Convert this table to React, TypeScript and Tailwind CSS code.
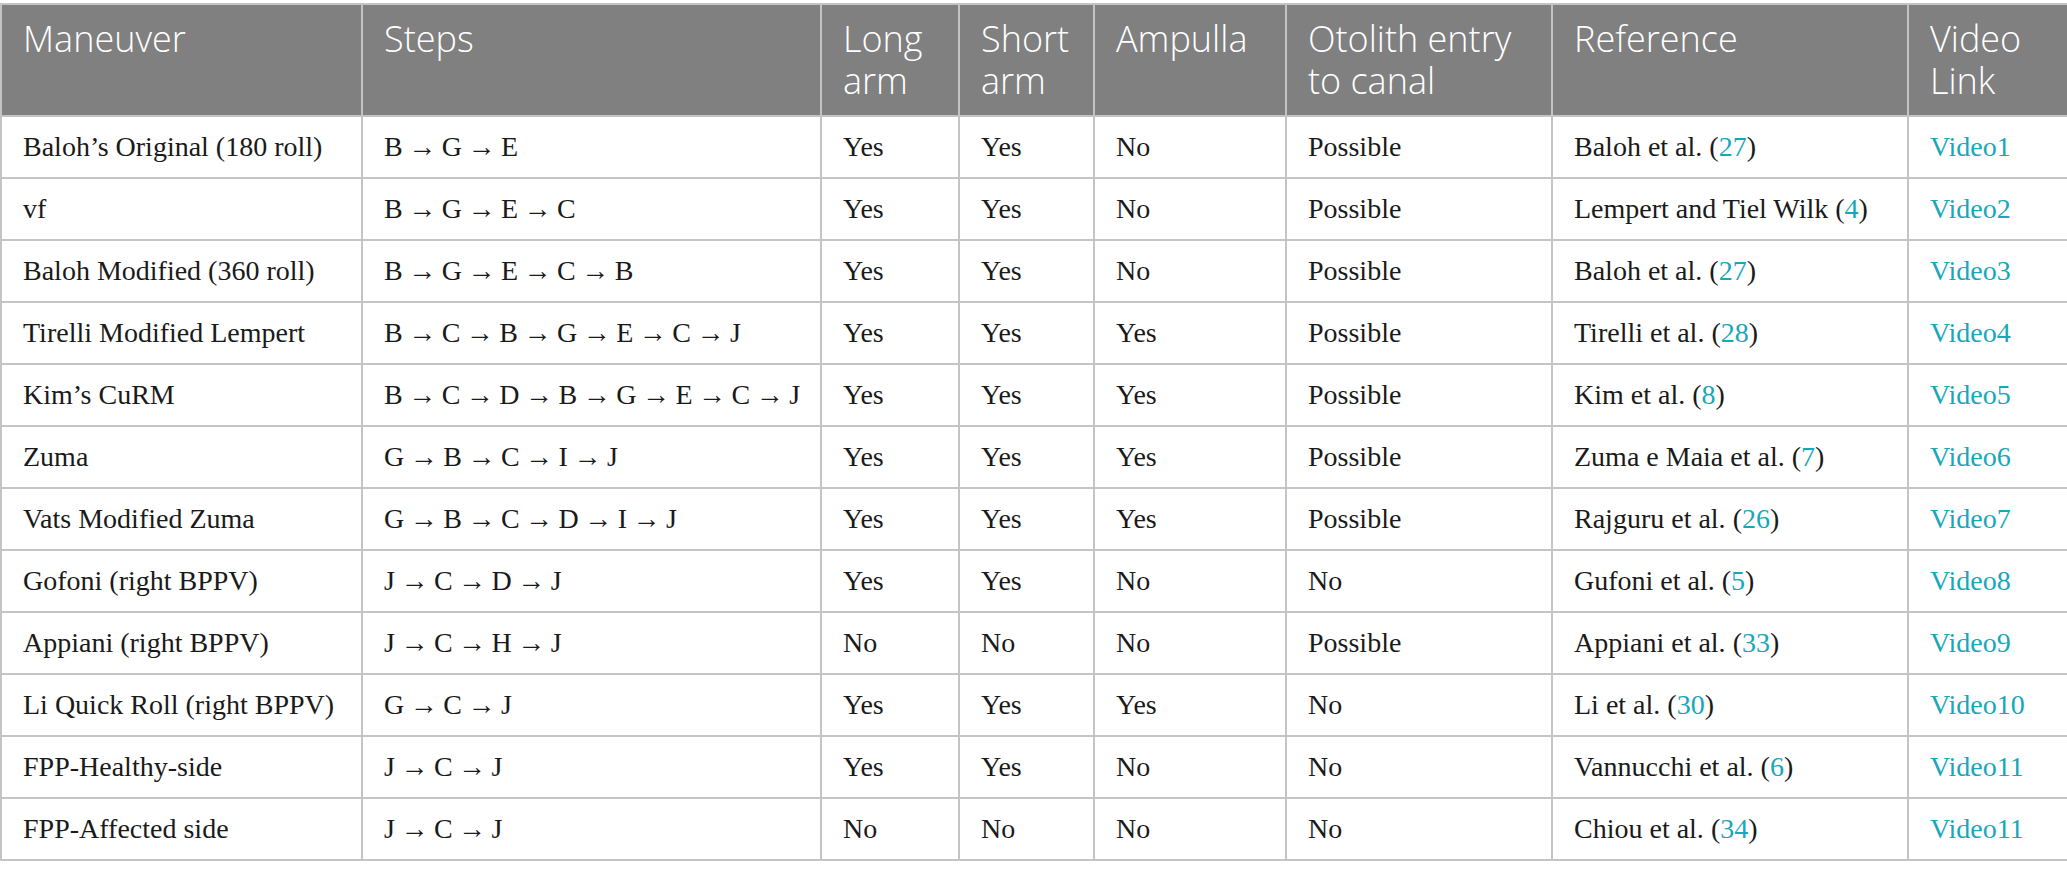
import React from 'react';

type Row = {
  name: string;
  steps: string;
  long: string;
  short: string;
  ampulla: string;
  entry: string;
  ref: string;
  cite: string;
  video: string;
};

const rows: Row[] = [
  { name: 'Baloh’s Original (180 roll)', steps: 'B → G → E', long: 'Yes', short: 'Yes', ampulla: 'No', entry: 'Possible', ref: 'Baloh et al.', cite: '27', video: 'Video1' },
  { name: 'vf', steps: 'B → G → E → C', long: 'Yes', short: 'Yes', ampulla: 'No', entry: 'Possible', ref: 'Lempert and Tiel Wilk', cite: '4', video: 'Video2' },
  { name: 'Baloh Modified (360 roll)', steps: 'B → G → E → C → B', long: 'Yes', short: 'Yes', ampulla: 'No', entry: 'Possible', ref: 'Baloh et al.', cite: '27', video: 'Video3' },
  { name: 'Tirelli Modified Lempert', steps: 'B → C → B → G → E → C → J', long: 'Yes', short: 'Yes', ampulla: 'Yes', entry: 'Possible', ref: 'Tirelli et al.', cite: '28', video: 'Video4' },
  { name: 'Kim’s CuRM', steps: 'B → C → D → B → G → E → C → J', long: 'Yes', short: 'Yes', ampulla: 'Yes', entry: 'Possible', ref: 'Kim et al.', cite: '8', video: 'Video5' },
  { name: 'Zuma', steps: 'G → B → C → I → J', long: 'Yes', short: 'Yes', ampulla: 'Yes', entry: 'Possible', ref: 'Zuma e Maia et al.', cite: '7', video: 'Video6' },
  { name: 'Vats Modified Zuma', steps: 'G → B → C → D → I → J', long: 'Yes', short: 'Yes', ampulla: 'Yes', entry: 'Possible', ref: 'Rajguru et al.', cite: '26', video: 'Video7' },
  { name: 'Gofoni (right BPPV)', steps: 'J → C → D → J', long: 'Yes', short: 'Yes', ampulla: 'No', entry: 'No', ref: 'Gufoni et al.', cite: '5', video: 'Video8' },
  { name: 'Appiani (right BPPV)', steps: 'J → C → H → J', long: 'No', short: 'No', ampulla: 'No', entry: 'Possible', ref: 'Appiani et al.', cite: '33', video: 'Video9' },
  { name: 'Li Quick Roll (right BPPV)', steps: 'G → C → J', long: 'Yes', short: 'Yes', ampulla: 'Yes', entry: 'No', ref: 'Li et al.', cite: '30', video: 'Video10' },
  { name: 'FPP-Healthy-side', steps: 'J → C → J', long: 'Yes', short: 'Yes', ampulla: 'No', entry: 'No', ref: 'Vannucchi et al.', cite: '6', video: 'Video11' },
  { name: 'FPP-Affected side', steps: 'J → C → J', long: 'No', short: 'No', ampulla: 'No', entry: 'No', ref: 'Chiou et al.', cite: '34', video: 'Video11' },
];

// header labels, each inner array is one line
const headers: string[][] = [
  ['Maneuver'],
  ['Steps'],
  ['Long', 'arm'],
  ['Short', 'arm'],
  ['Ampulla'],
  ['Otolith entry', 'to canal'],
  ['Reference'],
  ['Video', 'Link'],
];
const widths = [361, 459, 138, 135, 192, 266, 356, 160];

const th = 'border-2 border-[#c4c4c4] px-[21px] pt-[13px] align-top text-left font-light text-[36px] leading-[42px] text-white whitespace-nowrap';
const td = 'border-2 border-[#c4c4c4] px-[21px] align-middle text-[28px] text-[#1a1a1a] whitespace-nowrap';

export default function App() {
  return (
    <div className="bg-white w-[2067px] h-[877px] pt-[3px]">
      <table className="table-fixed border-collapse w-[2067px]">
        <colgroup>
          {widths.map((w, i) => (
            <col key={i} style={{ width: w }} />
          ))}
        </colgroup>
        <thead>
          <tr className="h-[112px] bg-[#808080] font-['Open_Sans',sans-serif]">
            {headers.map((lines, i) => (
              <th key={i} className={th}>
                {lines.map((l) => (
                  <div key={l}>{l}</div>
                ))}
              </th>
            ))}
          </tr>
        </thead>
        <tbody className="font-['Liberation_Serif',serif]">
          {rows.map((r, i) => (
            <tr key={i} className="h-[62px]">
              <td className={td}>{r.name}</td>
              <td className={`${td} [word-spacing:-1.5px]`}>{r.steps}</td>
              <td className={td}>{r.long}</td>
              <td className={td}>{r.short}</td>
              <td className={td}>{r.ampulla}</td>
              <td className={td}>{r.entry}</td>
              <td className={td}>
                {r.ref} (<span className="text-[#17a7ba]">{r.cite}</span>)
              </td>
              <td className={td}>
                <span className="text-[#17a7ba]">{r.video}</span>
              </td>
            </tr>
          ))}
        </tbody>
      </table>
    </div>
  );
}
